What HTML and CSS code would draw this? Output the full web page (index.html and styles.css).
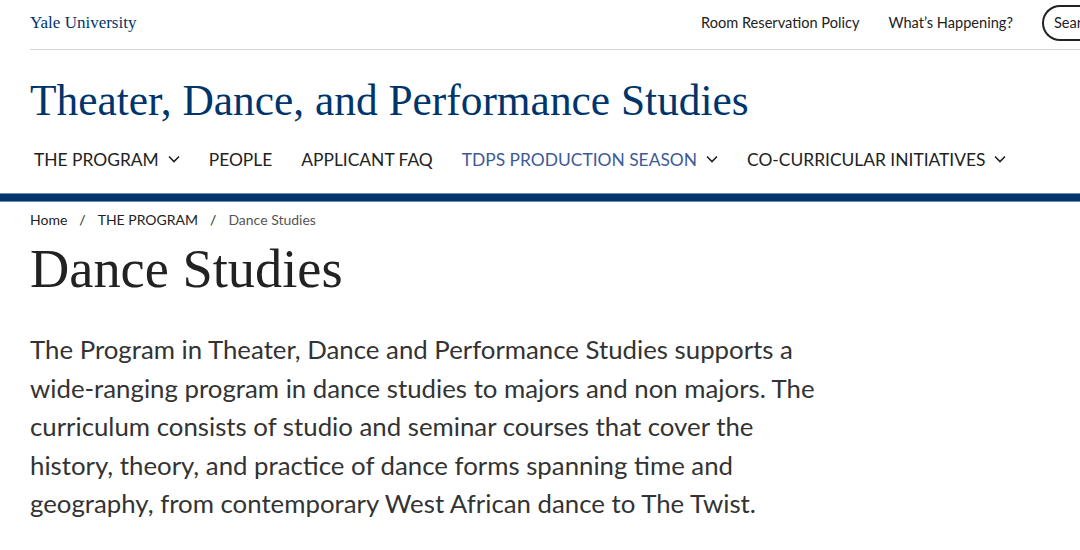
FILE: index.html
```html
<!DOCTYPE html>
<html lang="en">
<head>
<meta charset="utf-8">
<title>Dance Studies | Theater, Dance, and Performance Studies</title>
<link rel="stylesheet" href="styles.css">
</head>
<body>
<header class="site-header">
  <div class="utility">
    <a class="yale" href="#">Yale University</a>
    <nav class="utility-links">
      <a href="#">Room Reservation Policy</a>
      <a href="#">What’s Happening?</a>
      <span class="search">Search</span>
    </nav>
  </div>
  <div class="brand">
    <a class="site-name" href="#">Theater, Dance, and Performance Studies</a>
  </div>
  <nav class="main-nav">
    <a href="#" class="item">THE PROGRAM <svg class="chev" viewBox="0 0 12 8" width="12" height="8"><path d="M1 1.5 L6 6.5 L11 1.5" fill="none" stroke="#222" stroke-width="1.6"/></svg></a>
    <a href="#" class="item">PEOPLE</a>
    <a href="#" class="item">APPLICANT FAQ</a>
    <a href="#" class="item active">TDPS PRODUCTION SEASON <svg class="chev" viewBox="0 0 12 8" width="12" height="8"><path d="M1 1.5 L6 6.5 L11 1.5" fill="none" stroke="#222" stroke-width="1.6"/></svg></a>
    <a href="#" class="item">CO-CURRICULAR INITIATIVES <svg class="chev" viewBox="0 0 12 8" width="12" height="8"><path d="M1 1.5 L6 6.5 L11 1.5" fill="none" stroke="#222" stroke-width="1.6"/></svg></a>
  </nav>
</header>
<div class="bar"></div>
<main class="content">
  <div class="crumbs">
    <a href="#">Home</a><span class="sep">/</span><a href="#">THE PROGRAM</a><span class="sep">/</span><span class="current">Dance Studies</span>
  </div>
  <h1 class="page-title">Dance Studies</h1>
  <p class="lead">The Program in Theater, Dance and Performance Studies supports a<br>wide-ranging program in dance studies to majors and non majors. The<br>curriculum consists of studio and seminar courses that cover the<br>history, theory, and practice of dance forms spanning time and<br>geography, from contemporary West African dance to The Twist.</p>
</main>
</body>
</html>
```
FILE: styles.css
```css
html, body { margin: 0; padding: 0; background: #fff; }
body { font-family: Lato, "Open Sans", sans-serif; color: #222; overflow: hidden; width: 1080px; }
a { text-decoration: none; color: inherit; }

.site-header { padding-left: 30px; }
.utility {
  display: flex; align-items: center; justify-content: space-between;
  height: 50px; border-bottom: 1px solid #d6d6d6; box-sizing: border-box;
}
.yale { font-family: "Liberation Serif", serif; font-size: 17px; color: #00356b; margin-top: -4px; }
.utility-links { display: flex; align-items: center; font-size: 14.6px; color: #222; margin-top: -4px; }
.utility-links a { margin-right: 29px; }
.search {
  display: inline-block; height: 36px; line-height: 32px; box-sizing: border-box;
  border: 2px solid #222; border-right: none; border-radius: 18px 0 0 18px;
  padding-left: 10px; width: 38px; overflow: hidden; white-space: nowrap;
}
.brand { padding-top: 28px; height: 46px; }
.site-name { font-family: "Liberation Serif", serif; font-size: 43.4px; color: #00356b; line-height: 44px; white-space: nowrap; }
.main-nav { display: flex; align-items: center; height: 70px; margin-left: 4px; font-size: 17.4px; }
.main-nav .item { display: flex; align-items: center; margin-right: 29px; color: #222; }
.main-nav .item.active { color: #3d5a99; }
.chev { margin-left: 9px; }
.bar { height: 7px; background: #00356b; box-shadow: 0 -1px 0 #6b8bb0, 0 1px 0 #6b8bb0; }
.content { padding-left: 30px; }
.crumbs { font-size: 14px; padding-top: 10px; color: #222; }
.crumbs .sep { margin: 0 12px; }
.crumbs .current { color: #555; }
.page-title { font-family: "Liberation Serif", serif; font-weight: normal; font-size: 54.4px; margin: 9px 0 0; line-height: 64px; color: #222; }
.lead { font-size: 25.8px; line-height: 38.5px; color: #333; margin: 29px 0 0; white-space: nowrap; }
```
